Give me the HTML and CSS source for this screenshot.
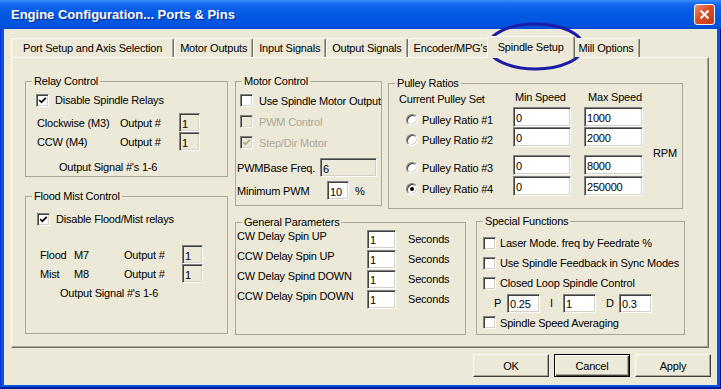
FILE: index.html
```html
<!DOCTYPE html>
<html lang="en">

<head>
    <meta charset="UTF-8">
    <title>Engine Configuration... Ports &amp; Pins</title>
    <link rel="stylesheet" href="styles.css">
</head>

<body>
    <div class="window">
        <div class="titlebar">
            <span class="title">Engine Configuration... Ports &amp; Pins</span>
            <span class="close">
                <svg width="11" height="11" viewBox="0 0 11 11"><path d="M1.5 1.5 L9.5 9.5 M9.5 1.5 L1.5 9.5" stroke="#fff" stroke-width="2" /></svg>
            </span>
        </div>

        <div class="client">
            <div class="tabs">
                <div class="tab first">Port Setup and Axis Selection</div>
                <div class="tab">Motor Outputs</div>
                <div class="tab">Input Signals</div>
                <div class="tab">Output Signals</div>
                <div class="tab tight">Encoder/MPG's</div>
                <div class="tab active">Spindle Setup</div>
                <div class="tab">Mill Options</div>
            </div>

            <div class="panel">
                <div class="col-left">
                    <fieldset class="group relay">
                        <legend>Relay Control</legend>
                        <div class="check-row">
                            <span class="check"><svg width="9" height="9" viewBox="0 0 9 9"><polyline points="1.2,4 3.4,6.3 7.8,1.8" fill="none" stroke="#000" stroke-width="1.8" /></svg></span>
                            <span>Disable Spindle Relays</span>
                        </div>
                        <div class="out-rows">
                            <div class="out-row"><span class="r-name">Clockwise (M3)</span><span class="r-lbl">Output #</span><input class="box small off" value="1" readonly></div>
                            <div class="out-row"><span class="r-name">CCW (M4)</span><span class="r-lbl">Output #</span><input class="box small off" value="1" readonly></div>
                        </div>
                        <div class="note">Output Signal #'s 1-6</div>
                    </fieldset>

                    <fieldset class="group flood">
                        <legend>Flood Mist Control</legend>
                        <div class="check-row">
                            <span class="check"><svg width="9" height="9" viewBox="0 0 9 9"><polyline points="1.2,4 3.4,6.3 7.8,1.8" fill="none" stroke="#000" stroke-width="1.8" /></svg></span>
                            <span>Disable Flood/Mist relays</span>
                        </div>
                        <div class="out-rows">
                            <div class="out-row"><span class="f-name">Flood</span><span class="f-code">M7</span><span class="f-lbl">Output #</span><input class="box small off" value="1" readonly></div>
                            <div class="out-row"><span class="f-name">Mist</span><span class="f-code">M8</span><span class="f-lbl">Output #</span><input class="box small off" value="1" readonly></div>
                        </div>
                        <div class="note">Output Signal #'s 1-6</div>
                    </fieldset>
                </div>

                <div class="col-right">
                    <div class="row-top">
                        <fieldset class="group motor">
                            <legend>Motor Control</legend>
                            <div class="check-row">
                                <span class="check"></span>
                                <span>Use Spindle Motor Output</span>
                            </div>
                            <div class="check-row disabled">
                                <span class="check"></span>
                                <span>PWM Control</span>
                            </div>
                            <div class="check-row disabled">
                                <span class="check"><svg width="9" height="9" viewBox="0 0 9 9"><polyline points="1.2,4 3.4,6.3 7.8,1.8" fill="none" stroke="#aca899" stroke-width="1.8" /></svg></span>
                                <span>Step/Dir Motor</span>
                            </div>
                            <div class="field-row freq">
                                <span class="fr-lbl">PWMBase Freq.</span>
                                <input class="box wide off" value="6" readonly>
                            </div>
                            <div class="field-row minpwm">
                                <span class="fr-lbl">Minimum PWM</span>
                                <input class="box pct" value="10">
                                <span class="pct-sign">%</span>
                            </div>
                        </fieldset>

                        <fieldset class="group pulley">
                            <legend>Pulley Ratios</legend>
                            <div class="pulley-head">
                                <span class="ph-set">Current Pulley Set</span>
                                <span class="ph-min">Min Speed</span>
                                <span>Max Speed</span>
                            </div>
                            <div class="pulley-body">
                                <div class="pulley-rows">
                                    <div class="ratio-row">
                                        <span class="ratio"><span class="radio"></span>Pulley Ratio #1</span>
                                        <input class="box speed" value="0">
                                        <input class="box speed max" value="1000">
                                    </div>
                                    <div class="ratio-row">
                                        <span class="ratio"><span class="radio"></span>Pulley Ratio #2</span>
                                        <input class="box speed" value="0">
                                        <input class="box speed max" value="2000">
                                    </div>
                                    <div class="ratio-row">
                                        <span class="ratio"><span class="radio"></span>Pulley Ratio #3</span>
                                        <input class="box speed" value="0">
                                        <input class="box speed max" value="8000">
                                    </div>
                                    <div class="ratio-row">
                                        <span class="ratio"><span class="radio on"></span>Pulley Ratio #4</span>
                                        <input class="box speed" value="0">
                                        <input class="box speed max" value="250000">
                                    </div>
                                </div>
                                <span class="rpm">RPM</span>
                            </div>
                        </fieldset>
                    </div>

                    <div class="row-bottom">
                        <fieldset class="group general">
                            <legend>General Parameters</legend>
                            <div class="param-row"><span class="p-name">CW Delay Spin UP</span><input class="box sec" value="1"><span class="unit">Seconds</span></div>
                            <div class="param-row"><span class="p-name">CCW Delay Spin UP</span><input class="box sec" value="1"><span class="unit">Seconds</span></div>
                            <div class="param-row"><span class="p-name">CW Delay Spind DOWN</span><input class="box sec" value="1"><span class="unit">Seconds</span></div>
                            <div class="param-row"><span class="p-name">CCW Delay Spin DOWN</span><input class="box sec" value="1"><span class="unit">Seconds</span></div>
                        </fieldset>

                        <fieldset class="group special">
                            <legend>Special Functions</legend>
                            <div class="check-row">
                                <span class="check"></span>
                                <span class="clip">Laser Mode. freq by Feedrate %</span>
                            </div>
                            <div class="check-row">
                                <span class="check"></span>
                                <span class="clip">Use Spindle Feedback in Sync Modes</span>
                            </div>
                            <div class="check-row">
                                <span class="check"></span>
                                <span class="clip">Closed Loop Spindle Control</span>
                            </div>
                            <div class="pid-row">
                                <span class="pid-l">P</span><input class="box pid" value="0.25">
                                <span class="pid-l">I</span><input class="box pid" value="1">
                                <span class="pid-l">D</span><input class="box pid" value="0.3">
                            </div>
                            <div class="check-row last">
                                <span class="check"></span>
                                <span class="clip">Spindle Speed Averaging</span>
                            </div>
                        </fieldset>
                    </div>
                </div>
            </div>

            <div class="buttons">
                <button class="btn">OK</button>
                <button class="btn default">Cancel</button>
                <button class="btn">Apply</button>
            </div>
        </div>

        <svg class="circle-mark" width="100" height="50" viewBox="0 0 100 50">
            <ellipse cx="49.5" cy="24.5" rx="47.5" ry="22.5" fill="none" stroke="#1b1ca6" stroke-width="3" />
        </svg>
    </div>
</body>

</html>
```

FILE: styles.css
```css
body {
    margin: 0;
    font-family: "Liberation Sans", Arial, sans-serif;
    font-size: 11px;
    letter-spacing: -0.2px;
    color: #000;
}

.window {
    position: relative;
    width: 721px;
    height: 389px;
    display: flex;
    flex-direction: column;
    background: #0553e1;
    box-shadow: inset 1px 0 #0831d9, inset -1px 0 #00138c, inset 0 -2px #001a9c;
}

.titlebar {
    height: 29px;
    flex: none;
    display: flex;
    align-items: center;
    justify-content: space-between;
    padding: 0 6px 0 11px;
    background: linear-gradient(#3d8ef8 0, #1b70f2 3px, #0a60e8 8px, #0058e4 16px, #0054df 25px, #0049d5 29px);
}

.title {
    color: #fff;
    font-weight: bold;
    font-size: 13px;
    letter-spacing: 0;
    text-shadow: 1px 1px #0a2a8c;
}

.close {
    width: 21px;
    height: 21px;
    box-sizing: border-box;
    border: 1px solid #fff;
    border-radius: 3px;
    background: linear-gradient(135deg, #ec8d74, #dc4d26 45%, #c23a18);
    display: flex;
    align-items: center;
    justify-content: center;
}

.client {
    flex: 1;
    margin: 0 4px 4px;
    background: #ece9d8;
    display: flex;
    flex-direction: column;
}

/* tab strip */

.tabs {
    display: flex;
    align-items: flex-end;
    height: 21px;
    margin: 7px 0 0 7px;
    position: relative;
    z-index: 1;
}

.tab {
    height: 19px;
    box-sizing: border-box;
    padding: 0 5px;
    display: flex;
    align-items: center;
    white-space: nowrap;
    background: #ece9d8;
    border: 1px solid #fff;
    border-bottom: none;
    border-right-color: #716f64;
    border-radius: 2px 2px 0 0;
    box-shadow: inset -1px 0 #aca899;
}

.tab.first {
    padding: 0 11px;
}

.tab.tight {
    padding-right: 0;
}

.tab.active {
    height: 22px;
    margin: 0 -2px -1px;
    padding: 0 10px 2px;
    position: relative;
    z-index: 1;
}

.panel {
    margin-left: 7px;
    width: 698px;
    height: 291px;
    box-sizing: border-box;
    border: 1px solid #fff;
    border-right-color: #716f64;
    border-bottom-color: #716f64;
    box-shadow: inset -1px -1px #aca899;
    display: flex;
    gap: 7px;
    padding: 17px 0 0 13px;
}

.col-left {
    width: 203px;
    display: flex;
    flex-direction: column;
    gap: 13px;
}

.col-right {
    display: flex;
    flex-direction: column;
}

.row-top {
    display: flex;
    gap: 6px;
    align-items: flex-start;
    height: 134px;
}

.row-bottom {
    display: flex;
    gap: 10px;
    align-items: flex-start;
    margin-top: 6px;
}

/* group boxes */

.group {
    margin: 0;
    padding: 0;
    min-width: 0;
    box-sizing: border-box;
    border: 1px solid #aca899;
}

.group legend {
    padding: 0 2px;
    margin-left: 6px;
    line-height: 13px;
}

.relay { height: 102px; }
.flood { height: 144px; }
.motor { width: 147px; height: 131px; }
.pulley { width: 295px; height: 132px; margin-top: 2px; }
.general { width: 231px; height: 119px; margin-top: 1px; }
.special { width: 209px; height: 120px; }

/* controls */

.check-row {
    display: flex;
    align-items: center;
    gap: 6px;
    height: 16px;
}

.check {
    width: 13px;
    height: 13px;
    flex: none;
    box-sizing: border-box;
    border: 1px solid;
    border-color: #808080 #fff #fff #808080;
    box-shadow: inset 1px 1px #404040, inset -1px -1px #d4d0c8;
    background: #fff;
    display: flex;
    align-items: center;
    justify-content: center;
}

.check-row.disabled {
    color: #aca899;
}

.check-row.disabled .check {
    background: #ece9d8;
}

.radio {
    width: 12px;
    height: 12px;
    flex: none;
    box-sizing: border-box;
    border-radius: 50%;
    border: 1px solid;
    border-color: #808080 #fff #fff #808080;
    box-shadow: inset 1px 1px #404040, inset -1px -1px #d4d0c8;
    background: #fff;
    display: flex;
    align-items: center;
    justify-content: center;
    margin-bottom: 1px;
}

.radio.on::after {
    content: "";
    width: 4px;
    height: 4px;
    border-radius: 50%;
    background: #000;
}

.box {
    box-sizing: border-box;
    height: 19px;
    padding: 2px 2px 0;
    font: inherit;
    letter-spacing: inherit;
    color: #000;
    background: #fff;
    border: 1px solid;
    border-color: #808080 #fff #fff #808080;
    box-shadow: inset 1px 1px #404040, inset -1px -1px #d4d0c8;
    outline: none;
    margin: 0;
}

.box.off {
    background: #ece9d8;
}

.box.small { width: 21px; }

.note {
    line-height: 14px;
}

/* relay control */

.relay .check-row {
    margin: 4px 0 0 10px;
}

.out-row {
    display: flex;
    align-items: center;
    height: 19px;
}

.relay .out-rows { margin: 5px 0 0 11px; }
.r-name { width: 83px; }
.r-lbl { width: 59px; }
.relay .note { margin: 9px 0 0 33px; }

/* flood mist */

.flood .check-row {
    margin: 8px 0 0 11px;
}

.flood .out-rows { margin: 18px 0 0 14px; }
.f-name { width: 34px; }
.f-code { width: 50px; }
.f-lbl { width: 58px; }
.flood .note { margin: 3px 0 0 34px; }

/* motor control */

.motor .check-row {
    height: 21px;
    margin-left: 4px;
}

.motor .check-row:first-of-type {
    margin-top: 2px;
}

.field-row {
    display: flex;
    align-items: center;
    height: 19px;
    margin-left: 1px;
}

.freq { margin-top: 5px; }
.freq .fr-lbl { width: 83px; }
.box.wide { width: 57px; }

.minpwm { margin-top: 4px; }
.minpwm .fr-lbl { width: 90px; }
.box.pct { width: 22px; }
.pct-sign { margin-left: 6px; }

/* pulley ratios */

.pulley-head {
    display: flex;
    align-items: flex-start;
    height: 16px;
    line-height: 14px;
    margin-left: 10px;
}

.ph-set { width: 116px; padding-top: 2px; }
.ph-min { width: 73px; }

.pulley-body {
    display: flex;
    align-items: center;
    margin-top: 1px;
}

.pulley-rows { margin-left: 17px; }

.ratio-row {
    display: flex;
    height: 20px;
}

.ratio-row:nth-child(3) { margin-top: 8px; }
.ratio-row:nth-child(4) { margin-top: 1px; }

.ratio {
    width: 107px;
    display: flex;
    align-items: flex-end;
    gap: 4px;
    line-height: 14px;
}

.box.speed { width: 58px; height: 20px; }
.box.speed.max { width: 59px; margin-left: 13px; }

.rpm {
    margin: 3px 0 0 10px;
}

/* general parameters */

.param-row {
    display: flex;
    align-items: center;
    height: 20px;
    margin-left: 1px;
}

.p-name {
    width: 130px;
    align-self: flex-start;
    line-height: 14px;
}

.box.sec { width: 29px; }
.unit { margin-left: 12px; }

/* special functions */

.special .check-row {
    height: 20px;
    margin: 0 3px 0 6px;
    gap: 4px;
}

.special .check-row:first-of-type { margin-top: 5px; }
.special .check-row.last { height: 19px; }

.clip {
    white-space: nowrap;
    overflow: hidden;
}

.pid-row {
    display: flex;
    align-items: center;
    height: 20px;
    margin-left: 17px;
}

.pid-l {
    width: 8px;
    margin-right: 5px;
}

.box.pid { width: 33px; margin-right: 10px; }

/* dialog buttons */

.buttons {
    display: flex;
    justify-content: flex-end;
    gap: 5px;
    margin-top: 6px;
    padding-right: 6px;
}

.btn {
    width: 76px;
    height: 23px;
    padding: 0;
    font: inherit;
    letter-spacing: inherit;
    color: #000;
    background: #ece9d8;
    border: 1px solid;
    border-color: #fff #404040 #404040 #fff;
    box-shadow: inset -1px -1px #aca899;
}

.btn.default {
    border-color: #000;
    box-shadow: inset 1px 1px #fff, inset -1px -1px #404040, inset -2px -2px #aca899;
}

/* hand-drawn highlight round the active tab */

.circle-mark {
    position: absolute;
    left: 486px;
    top: 22px;
}
```
